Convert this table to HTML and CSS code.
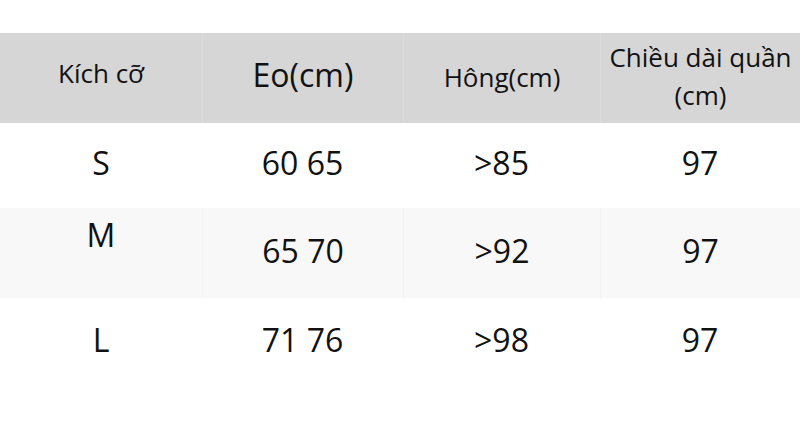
FILE: index.html
```html
<!DOCTYPE html>
<html lang="vi">
<head>
<meta charset="utf-8">
<title>Bảng kích cỡ</title>
<link rel="stylesheet" href="styles.css">
</head>
<body>
<div class="size-table">
  <div class="row row--head">
    <div class="cell cell--head">Kích cỡ</div>
    <div class="cell cell--head cell--big">Eo(cm)</div>
    <div class="cell cell--head cell--low">Hông(cm)</div>
    <div class="cell cell--head cell--wrap">Chiều dài quần<br>(cm)</div>
  </div>
  <div class="row row--s">
    <div class="cell">S</div>
    <div class="cell">60 65</div>
    <div class="cell">&gt;85</div>
    <div class="cell">97</div>
  </div>
  <div class="row row--m row--alt">
    <div class="cell cell--raised">M</div>
    <div class="cell">65 70</div>
    <div class="cell">&gt;92</div>
    <div class="cell">97</div>
  </div>
  <div class="row row--l">
    <div class="cell">L</div>
    <div class="cell">71 76</div>
    <div class="cell">&gt;98</div>
    <div class="cell">97</div>
  </div>
</div>
</body>
</html>
```
FILE: styles.css
```css
html, body {
  margin: 0;
  padding: 0;
  background: #ffffff;
}

body {
  font-family: "Open Sans", "Noto Sans", sans-serif;
  color: #111111;
  width: 800px;
  height: 445px;
  overflow: hidden;
}

.size-table {
  margin-top: 33px;
  display: flex;
  flex-direction: column;
}

.row {
  display: grid;
  grid-template-columns: 202px 201px 197px 200px;
}

.row--head {
  height: 90px;
  background: #d6d6d6;
}

.row--s { height: 85px; }
.row--m { height: 90px; }
.row--l { height: 88px; }

.row--alt {
  background: #f8f8f8;
}

.cell {
  display: flex;
  align-items: center;
  justify-content: center;
  text-align: center;
  font-size: 32px;
  line-height: 1.2;
  padding-bottom: 4px;
}

.row--alt .cell + .cell {
  border-left: 1px solid #f2f2f2;
}

.cell--head {
  font-size: 26px;
  padding-bottom: 8px;
}

.cell--head + .cell--head {
  border-left: 1px solid #dcdcdc;
}

.cell--big {
  font-size: 32px;
  padding-bottom: 6px;
}

.cell--low {
  padding-bottom: 0;
}

.cell--wrap {
  line-height: 38px;
  padding-bottom: 4px;
}

.cell--raised {
  padding-bottom: 36px;
}
```
